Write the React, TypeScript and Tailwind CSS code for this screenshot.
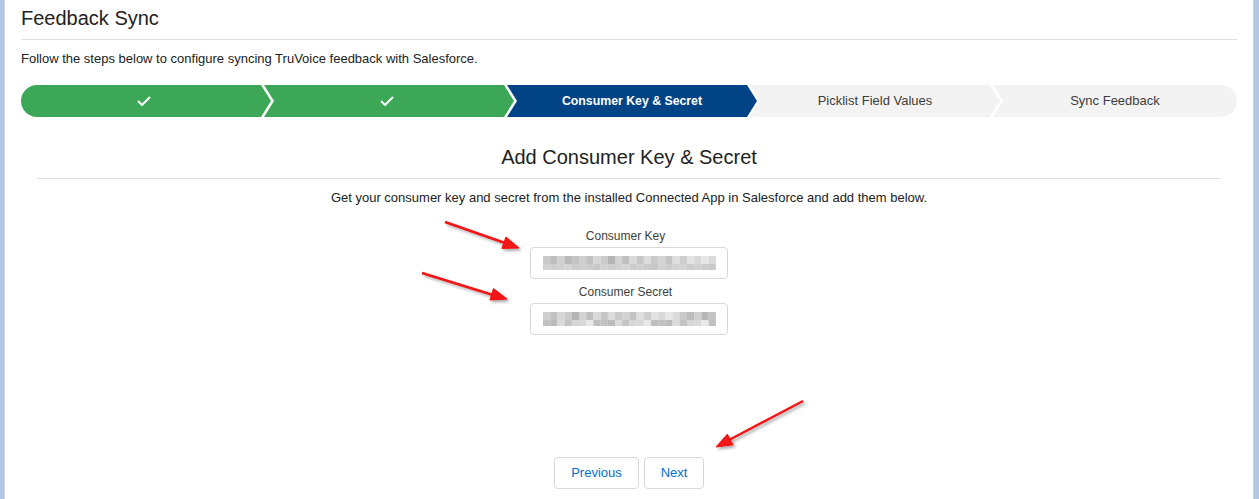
import React from "react";

const shadesA = [
  "#c8c8c8", "#bdbdbd", "#d0d0d0", "#b8b8b8", "#c4c4c4", "#cfcfcf", "#c1c1c1", "#d6d6d6",
  "#cbcbcb", "#b5b5b5", "#d3d3d3", "#bfbfbf", "#d9d9d9", "#c6c6c6", "#dcdcdc", "#cacaca",
  "#d4d4d4", "#c3c3c3", "#dedede", "#cecece", "#e2e2e2", "#d8d8d8", "#e6e6e6", "#dadada",
];
const shadesB = [
  "#d2d2d2", "#c7c7c7", "#c0c0c0", "#cdcdcd", "#d7d7d7", "#c2c2c2", "#d1d1d1", "#c9c9c9",
  "#bcbcbc", "#d5d5d5", "#c5c5c5", "#dbdbdb", "#cccccc", "#e0e0e0", "#c4c4c4", "#d0d0d0",
  "#bababa", "#d6d6d6", "#cbcbcb", "#e3e3e3", "#d9d9d9", "#c8c8c8", "#dfdfdf", "#e8e8e8",
];

function Blurred({ seed }: { seed: number }) {
  const cols = 24;
  const rects: React.ReactElement[] = [];
  for (let i = 0; i < cols; i++) {
    const a = shadesA[(i + seed) % shadesA.length];
    const b = shadesB[(i * 3 + seed) % shadesB.length];
    rects.push(<rect key={"a" + i} x={i * 7.2} y={0} width={7.3} height={8} fill={a} />);
    rects.push(<rect key={"b" + i} x={i * 7.2} y={8} width={7.3} height={6} fill={b} />);
  }
  return (
    <svg width="173" height="14" viewBox="0 0 173 14" className="block">
      {rects}
    </svg>
  );
}

function Check() {
  return (
    <svg width="14" height="10" viewBox="0 0 14 10" className="block">
      <polyline points="1,5 5,9 13,1" fill="none" stroke="white" strokeWidth="2" />
    </svg>
  );
}

function Arrows() {
  return (
    <svg
      className="pointer-events-none absolute left-0 top-0"
      width="1259"
      height="499"
      viewBox="0 0 1259 499"
    >
      <defs>
        <filter id="sh" x="-20%" y="-50%" width="140%" height="200%">
          <feDropShadow dx="2" dy="2" stdDeviation="1.5" floodColor="#000" floodOpacity="0.35" />
        </filter>
      </defs>
      <g filter="url(#sh)" fill="#f21212" stroke="#f21212">
        <line x1="445" y1="222" x2="505" y2="243" strokeWidth="2.5" />
        <polygon points="519,248 501.9,248.4 505.9,237" strokeWidth="1" />
        <line x1="422" y1="273" x2="493" y2="295" strokeWidth="2.5" />
        <polygon points="507,299 489.9,300 493.5,288.6" strokeWidth="1" />
        <line x1="803" y1="401" x2="729" y2="440" strokeWidth="2.5" />
        <polygon points="716,447 727.3,434.2 732.9,444.8" strokeWidth="1" />
      </g>
    </svg>
  );
}

export default function App() {
  return (
    <div className="relative flex h-[499px] w-[1259px] overflow-hidden bg-white font-['Liberation_Sans',Arial,sans-serif] text-[#3e3e3c]">
      <div className="w-[5px] shrink-0 border-r border-[#cfd3d8] bg-[#b3c7e5]" />
      <main className="flex min-w-0 flex-1 flex-col px-[16px]">
        <div className="h-[40px] border-b border-[#e0e0e0] pt-[4px]">
          <h1 className="text-[20px] leading-[28px] text-[#222]">Feedback Sync</h1>
        </div>
        <p className="mt-[10px] text-[13px] leading-[18px] text-[#222]">
          Follow the steps below to configure syncing TruVoice feedback with Salesforce.
        </p>

        <div className="mt-[17px] flex h-[32px] text-[13px]">
          <div className="flex w-[250px] shrink-0 items-center justify-center rounded-l-full bg-[#3ca857] pr-[4px] [clip-path:polygon(0_0,calc(100%_-_10px)_0,100%_50%,calc(100%_-_10px)_100%,0_100%)]">
            <Check />
          </div>
          <div className="ml-[-7px] flex w-[250px] shrink-0 items-center justify-center bg-[#3ca857] pr-[4px] [clip-path:polygon(0_0,calc(100%_-_10px)_0,100%_50%,calc(100%_-_10px)_100%,0_100%,10px_50%)]">
            <Check />
          </div>
          <div className="ml-[-7px] flex w-[250px] shrink-0 items-center justify-center bg-[#014486] text-[12.3px] font-bold text-white [clip-path:polygon(0_0,calc(100%_-_10px)_0,100%_50%,calc(100%_-_10px)_100%,0_100%,10px_50%)]">
            Consumer Key &amp; Secret
          </div>
          <div className="ml-[-7px] flex w-[250px] shrink-0 items-center justify-center bg-[#f3f3f3] text-[#3e3e3c] [clip-path:polygon(0_0,calc(100%_-_10px)_0,100%_50%,calc(100%_-_10px)_100%,0_100%,10px_50%)]">
            Picklist Field Values
          </div>
          <div className="ml-[-7px] flex flex-1 items-center justify-center rounded-r-full bg-[#f3f3f3] text-[#3e3e3c] [clip-path:polygon(0_0,100%_0,100%_100%,0_100%,10px_50%)]">
            Sync Feedback
          </div>
        </div>

        <h2 className="mt-[26px] text-center text-[20px] leading-[28px] text-[#222]">
          Add Consumer Key &amp; Secret
        </h2>
        <div className="mx-[16px] mt-[7px] h-px bg-[#e0e0e0]" />
        <p className="mt-[10px] text-center text-[13px] leading-[18px] text-[#222]">
          Get your consumer key and secret from the installed Connected App in Salesforce and add them below.
        </p>

        <div className="flex flex-col items-center">
          <label className="mr-[7px] mt-[21px] text-[12px] leading-[16px] text-[#3e3e3c]">Consumer Key</label>
          <div className="mt-[3px] flex h-[32px] w-[198px] items-center rounded-[4px] border border-[#d8d8d8] bg-white pl-[12px]">
            <Blurred seed={0} />
          </div>
          <label className="mr-[7px] mt-[5px] text-[12px] leading-[16px] text-[#3e3e3c]">Consumer Secret</label>
          <div className="mt-[3px] flex h-[32px] w-[198px] items-center rounded-[4px] border border-[#d8d8d8] bg-white pl-[12px]">
            <Blurred seed={5} />
          </div>

          <div className="mt-[122px] flex gap-[5px]">
            <button className="h-[32px] w-[85px] rounded-[4px] border border-[#d8d8d8] bg-white text-[13px] text-[#0070d2]">
              Previous
            </button>
            <button className="h-[32px] w-[60px] rounded-[4px] border border-[#d8d8d8] bg-white text-[13px] text-[#0070d2]">
              Next
            </button>
          </div>
        </div>
      </main>
      <div className="w-[6px] shrink-0 border-l border-[#cfd3d8] bg-[#b3c7e5]" />
      <Arrows />
    </div>
  );
}
